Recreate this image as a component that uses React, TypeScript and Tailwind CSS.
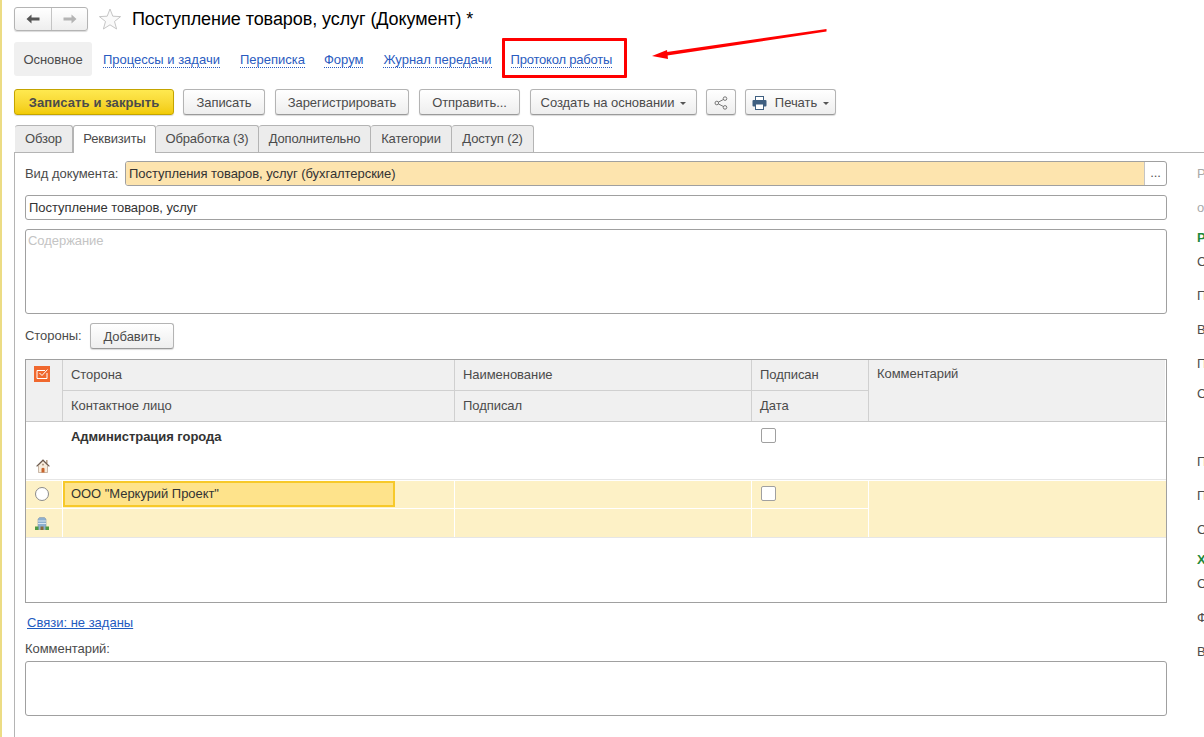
import React from "react";

function Btn({ className = "", children }: { className?: string; children: React.ReactNode }) {
  return (
    <div className={"flex h-[26px] items-center justify-center rounded-[3px] border border-[#b4b4b4] border-b-[#9a9a9a] bg-gradient-to-b from-[#ffffff] to-[#eeeeee] pt-px text-[#4b4b4b] shadow-[0_1px_1px_rgba(0,0,0,0.15)] " + className}>
      {children}
    </div>
  );
}

function Caret() {
  return <span className="ml-[6px] mt-[1px] h-0 w-0 border-x-[3px] border-t-[3px] border-x-transparent border-t-[#555555]" />;
}

function Link({ className = "", children }: { className?: string; children: React.ReactNode }) {
  return (
    <span className={"border-b border-dotted border-[#2a5bc0] leading-[14px] text-[#2a5bc0] " + className}>{children}</span>
  );
}

function Tab({ w, active, children }: { w: string; active?: boolean; children: React.ReactNode }) {
  return (
    <div
      className={
        w +
        " flex items-center justify-center rounded-t-[3px] border border-[#b4b4b4] tracking-[-0.15px] " +
        (active ? "z-10 h-[28px] border-b-0 bg-white pb-px" : "h-[27px] border-l-0 border-b-0 bg-[#ececec]")
      }
    >
      {children}
    </div>
  );
}

function Star() {
  return (
    <svg width="24" height="24" viewBox="0 0 24 24" className="ml-[10px]">
      <path d="M12 2 L14.8 9.2 L22.6 9.6 L16.5 14.5 L18.6 22 L12 17.8 L5.4 22 L7.5 14.5 L1.4 9.6 L9.2 9.2 Z" fill="#fafafa" stroke="#c6c6c6" strokeWidth="1" />
    </svg>
  );
}

function House() {
  return (
    <svg width="14" height="14" viewBox="0 0 14 14">
      <rect x="10" y="1" width="1.6" height="3.5" fill="#b9a48e" />
      <path d="M2.5 6.5 L7 2 L11.5 6.5 V13.5 H2.5 Z" fill="#f7ecdc" stroke="#a98f78" strokeWidth="0.6" />
      <path d="M0.6 7.4 L7 1 L13.4 7.4" fill="none" stroke="#6b5a4d" strokeWidth="1.2" />
      <path d="M5.5 13.5 V9.5 Q7 7.8 8.5 9.5 V13.5 Z" fill="#c8642c" />
      <rect x="6.4" y="4.8" width="1.2" height="1.6" fill="#8a6a50" />
    </svg>
  );
}

function Building() {
  return (
    <svg width="14" height="13" viewBox="0 0 14 13">
      <path d="M3 2 L4.5 0.5 H9.5 L11 2 V12.5 H3 Z" fill="#8eb0cf" stroke="#8c9cab" strokeWidth="0.6" />
      <path d="M3 4 H11 M3 6.5 H11" stroke="#dbe6ef" strokeWidth="1" />
      <rect x="0" y="9.5" width="3.5" height="3.5" fill="#4f9a42" />
      <rect x="10.5" y="9.5" width="3.5" height="3.5" fill="#4f9a42" />
      <rect x="5.5" y="9.5" width="3" height="3.5" fill="#8a6a3a" />
    </svg>
  );
}

function Checkbox() {
  return <div className="h-[15px] w-[15px] rounded-[2px] border border-[#a0a0a0] bg-white" />;
}

const cols = "grid grid-cols-[37px_392px_297px_117px_296px]";

function Side({ h, className = "", children }: { h: string; className?: string; children: React.ReactNode }) {
  return <div className={h + " leading-[14px] " + className}>{children}</div>;
}

export default function App() {
  return (
    <div className="relative h-[737px] w-[1204px] overflow-hidden bg-white text-[13px] tracking-[-0.05px] text-[#4b4b4b] [font-family:'Liberation_Sans',Arial,sans-serif]">
      <div className="flex h-full">
        <div className="h-full w-[2px] shrink-0 bg-[#ecdc84]" />
        <div className="flex h-full min-w-0 flex-1 flex-col pl-[12px]">
          {/* header */}
          <div className="mt-[7px] flex h-[24px] items-center">
            <div className="flex h-[24px] w-[74px] rounded-[3px] border border-[#b4b4b4] bg-gradient-to-b from-white to-[#eeeeee] shadow-[0_1px_1px_rgba(0,0,0,0.15)]">
              <div className="flex w-[37px] items-center justify-center border-r border-[#c4c4c4]">
                <svg width="14" height="10" viewBox="0 0 14 10"><path d="M5.5 0.5 L0.5 5 L5.5 9.5 V6.5 H13.5 V3.5 H5.5 Z" fill="#555555" /></svg>
              </div>
              <div className="flex flex-1 items-center justify-center">
                <svg width="14" height="10" viewBox="0 0 14 10"><path d="M8.5 0.5 L13.5 5 L8.5 9.5 V6.5 H0.5 V3.5 H8.5 Z" fill="#b4b4b4" /></svg>
              </div>
            </div>
            <Star />
            <div className="ml-[10px] text-[18px] leading-[24px] tracking-[-0.08px] text-black">Поступление товаров, услуг (Документ) *</div>
          </div>

          {/* section links */}
          <div className="mt-[11px] flex h-[34px] items-center">
            <div className="flex h-[34px] w-[78px] items-center justify-center rounded-[3px] bg-[#f0f0f0] pt-[1px]">Основное</div>
            <div className="ml-[11px] flex items-center gap-[20px] pt-[2px] leading-[14px] tracking-normal">
              <Link>Процессы и задачи</Link>
              <Link>Переписка</Link>
              <Link className="-ml-px">Форум</Link>
              <Link>Журнал передачи</Link>
              <div className="relative -ml-px flex">
                <Link className="tracking-[-0.2px]">Протокол работы</Link>
                <div className="absolute left-[-9px] top-[-15px] h-[40px] w-[125px] rounded-[1px] border-[3px] border-[#ff0000]" />
              </div>
            </div>
          </div>

          {/* buttons */}
          <div className="mt-[13px] flex items-center">
            <div className="flex h-[26px] w-[160px] items-center justify-center rounded-[3px] border border-[#c4a400] bg-gradient-to-b from-[#ffe94f] to-[#f2cb00] pt-px font-bold tracking-[0.1px] text-[#4b4b4b] shadow-[0_1px_1px_rgba(0,0,0,0.15)]">Записать и закрыть</div>
            <Btn className="ml-[9px] w-[82px]">Записать</Btn>
            <Btn className="ml-[10px] w-[134px]">Зарегистрировать</Btn>
            <Btn className="ml-[10px] w-[101px]">Отправить...</Btn>
            <Btn className="ml-[10px] w-[167px]">Создать на основании<Caret /></Btn>
            <Btn className="ml-[9px] w-[30px]">
              <svg width="14" height="14" viewBox="0 0 14 14" fill="none" stroke="#777777" strokeWidth="1">
                <circle cx="2.8" cy="7" r="1.8" />
                <circle cx="11" cy="2.6" r="1.8" />
                <circle cx="11" cy="11.4" r="1.8" />
                <path d="M4.4 6.1 L9.4 3.5 M4.4 7.9 L9.4 10.5" />
              </svg>
            </Btn>
            <Btn className="ml-[9px] w-[91px]">
              <svg width="15" height="14" viewBox="0 0 15 14" className="mr-[8px]">
                <rect x="3.5" y="0.5" width="8" height="4" fill="#ffffff" stroke="#3f5f80" />
                <rect x="0.5" y="4" width="14" height="6.5" rx="1" fill="#3f5f80" />
                <rect x="3.5" y="8" width="8" height="5.5" fill="#ffffff" stroke="#3f5f80" />
              </svg>
              Печать<Caret />
            </Btn>
          </div>

          {/* tabs */}
          <div className="mt-[10px] flex h-[27px] items-start pl-px">
            <Tab w="w-[58px]">Обзор</Tab>
            <Tab w="w-[83px]" active>Реквизиты</Tab>
            <Tab w="w-[103px]">Обработка (3)</Tab>
            <Tab w="w-[112px]">Дополнительно</Tab>
            <Tab w="w-[81px]">Категории</Tab>
            <Tab w="w-[82px]">Доступ (2)</Tab>
          </div>

          {/* body */}
          <div className="flex min-h-0 flex-1 border-l border-t border-[#b4b4b4] pl-[10px]">
            <div className="w-[1142px] shrink-0">
              <div className="mt-[8px] flex h-[25px] items-center">
                <div className="w-[100px]">Вид документа:</div>
                <div className="flex h-[25px] flex-1 rounded-[3px] border border-[#a0a0a0]">
                  <div className="flex flex-1 items-center rounded-l-[2px] bg-[#fde4ae] pl-[3px] text-[#333333]">Поступления товаров, услуг (бухгалтерские)</div>
                  <div className="flex w-[22px] items-center justify-center border-l border-[#c4c4c4] pb-[2px] text-[#555555]">...</div>
                </div>
              </div>
              <div className="mt-[9px] flex h-[25px] items-center rounded-[3px] border border-[#a0a0a0] pl-[3px] text-[#333333]">Поступление товаров, услуг</div>
              <div className="mt-[9px] h-[85px] rounded-[3px] border border-[#a0a0a0] pl-[2px] pt-[3px] leading-[16px] text-[#c4c4c4]">Содержание</div>

              <div className="mt-[9px] flex h-[26px] items-center">
                <div className="w-[65px]">Стороны:</div>
                <Btn className="w-[84px]">Добавить</Btn>
              </div>

              {/* table */}
              <div className="mt-[10px] h-[244px] border border-[#a0a0a0]">
                <div className={cols + " h-[62px] border-b border-[#c8c8c8]"}>
                  <div className="row-span-2 flex justify-center border-r border-[#d0d0d0] bg-[#f0f0f0] pr-[4px] pt-[6px]">
                    <svg width="16" height="16" viewBox="0 0 16 16">
                      <rect width="16" height="16" fill="#f0682e" />
                      <path d="M3 4.5 H11 M3 4.5 V12.5 H13 V7" fill="none" stroke="#ffffff" strokeWidth="1" />
                      <path d="M5.5 7 L8 9.5 L13.5 3.5" fill="none" stroke="#ffffff" strokeWidth="1" />
                    </svg>
                  </div>
                  <div className="flex items-center border-b border-r border-[#d0d0d0] bg-[#f0f0f0] pl-[8px]">Сторона</div>
                  <div className="flex items-center border-b border-r border-[#d0d0d0] bg-[#f0f0f0] pl-[8px]">Наименование</div>
                  <div className="flex items-center border-b border-r border-[#d0d0d0] bg-[#f0f0f0] pl-[8px]">Подписан</div>
                  <div className="row-span-2 bg-[#f0f0f0] pl-[8px] pt-[7px] leading-[14px]">Комментарий</div>
                  <div className="flex items-center border-r border-[#d0d0d0] bg-[#f0f0f0] pl-[8px]">Контактное лицо</div>
                  <div className="flex items-center border-r border-[#d0d0d0] bg-[#f0f0f0] pl-[8px]">Подписал</div>
                  <div className="flex items-center border-r border-[#d0d0d0] bg-[#f0f0f0] pl-[8px]">Дата</div>
                </div>

                <div className={cols + " h-[58px] grid-rows-[29px_29px] border-b border-[#e6e6e6]"}>
                  <div />
                  <div className="flex items-center pl-[8px] font-bold text-[#333333]">Администрация города</div>
                  <div />
                  <div className="flex items-center pb-[2px] pl-[9px]"><Checkbox /></div>
                  <div />
                  <div className="flex items-center justify-center pr-[4px]"><House /></div>
                  <div />
                  <div />
                  <div />
                  <div />
                </div>

                <div className="mt-px border-b border-[#e6e6e6] bg-[#fdf1c6]">
                  <div className={cols + " h-[56px] grid-rows-[28px_28px]"}>
                    <div className="flex items-center justify-center border-b border-r border-white pb-[2px] pr-[4px]">
                      <div className="h-[14px] w-[14px] rounded-full border border-[#8a8a8a] bg-white" />
                    </div>
                    <div className="border-b border-r border-white">
                      <div className="flex h-[26px] w-[332px] items-center border-2 border-[#f7c92a] bg-[#fee38b] pl-[6px] text-[#333333]">ООО "Меркурий Проект"</div>
                    </div>
                    <div className="border-b border-r border-white" />
                    <div className="flex items-center border-b border-r border-white pb-[2px] pl-[9px]"><Checkbox /></div>
                    <div className="row-span-2" />
                    <div className="flex items-center justify-center border-r border-white pr-[4px]"><Building /></div>
                    <div className="border-r border-white" />
                    <div className="border-r border-white" />
                    <div className="border-r border-white" />
                  </div>
                </div>
              </div>

              <div className="mt-[13px] pl-[2px] leading-[14px] tracking-normal">
                <span className="text-[#1f5bbf] underline">Связи: не заданы</span>
              </div>
              <div className="mt-[12px] leading-[14px]">Комментарий:</div>
              <div className="mt-[5px] h-[55px] rounded-[3px] border border-[#a0a0a0]" />
            </div>

            {/* clipped right column */}
            <div className="ml-[30px] flex flex-col pt-[14px]">
              <Side h="h-[34px]" className="text-[#a8a8a8]">Р</Side>
              <Side h="h-[30px]" className="text-[#a8a8a8]">о</Side>
              <Side h="h-[24px]" className="font-bold text-[#1d8a3c]">Р</Side>
              <Side h="h-[34px]">С</Side>
              <Side h="h-[34px]">П</Side>
              <Side h="h-[34px]">В</Side>
              <Side h="h-[30px]">П</Side>
              <Side h="h-[68px]">С</Side>
              <Side h="h-[34px]">П</Side>
              <Side h="h-[34px]">П</Side>
              <Side h="h-[30px]">С</Side>
              <Side h="h-[24px]" className="font-bold text-[#1d8a3c]">Х</Side>
              <Side h="h-[34px]">С</Side>
              <Side h="h-[34px]">Ф</Side>
              <Side h="h-[34px]">В</Side>
            </div>
          </div>
        </div>
      </div>

      {/* annotation arrow */}
      <svg width="180" height="40" viewBox="0 0 180 40" className="absolute left-[650px] top-[25px]">
        <path d="M176.5 4 L176.5 6.5 L14 31 L13.5 27.5 Z" fill="#ff0000" />
        <path d="M2 31 L17 25 L18 34 Z" fill="#ff0000" />
      </svg>
    </div>
  );
}
